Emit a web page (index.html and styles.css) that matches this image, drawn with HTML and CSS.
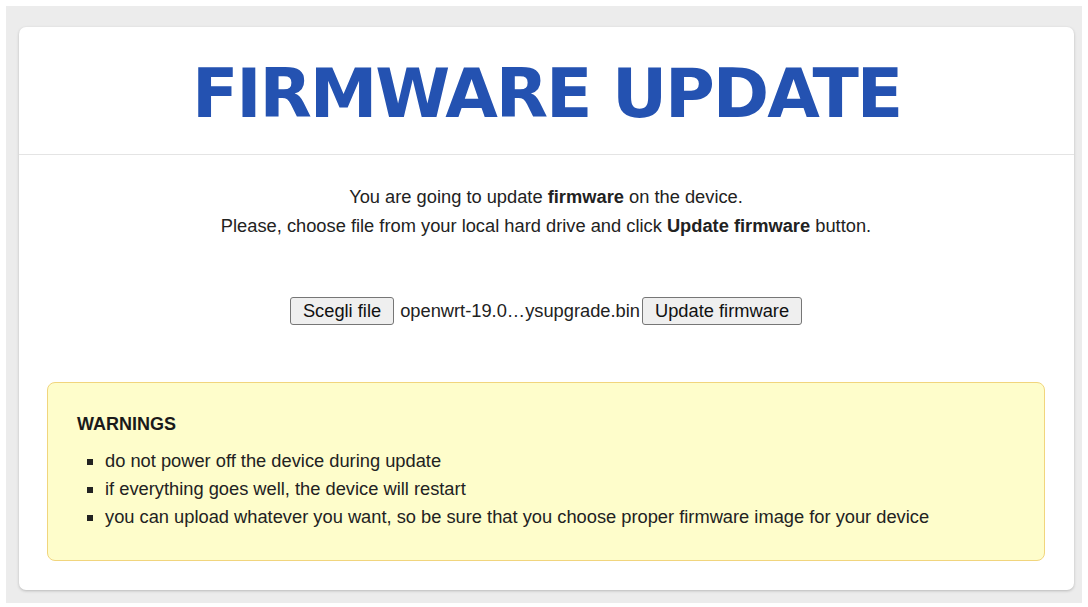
FILE: index.html
```html
<!DOCTYPE html>
<html>
<head>
<meta charset="utf-8">
<title>Firmware update</title>
<link rel="stylesheet" href="styles.css">
</head>
<body>
<div class="frame">
  <div class="card">
    <header class="card-header">
      <h1 class="title">FIRMWARE UPDATE</h1>
    </header>
    <main class="card-body">
      <p class="intro">You are going to update <b>firmware</b> on the device.<br>Please, choose file from your local hard drive and click <b>Update firmware</b> button.</p>
      <form class="upload-row">
        <button type="button" class="btn">Scegli file</button>
        <span class="file-name">openwrt-19.0…ysupgrade.bin</span>
        <button type="button" class="btn">Update firmware</button>
      </form>
      <section class="warnings">
        <h2 class="warnings-title">WARNINGS</h2>
        <ul class="warnings-list">
          <li>do not power off the device during update</li>
          <li>if everything goes well, the device will restart</li>
          <li>you can upload whatever you want, so be sure that you choose proper firmware image for your device</li>
        </ul>
      </section>
    </main>
  </div>
</div>
</body>
</html>
```

FILE: styles.css
```css
html, body {
  margin: 0;
  padding: 0;
  background: #ffffff;
}

body {
  font-family: "Liberation Sans", Arial, sans-serif;
  color: #222222;
}

.frame {
  margin: 6px 6px 0 6px;
  height: 597px;
  box-sizing: border-box;
  background: #ececec;
  padding: 21px 8px 13px 13px;
}

.card {
  background: #ffffff;
  border-radius: 7px;
  box-shadow: 0 1px 3px rgba(0, 0, 0, 0.22);
  height: 563px;
  display: flex;
  flex-direction: column;
}

.card-header {
  height: 128px;
  box-sizing: border-box;
  padding-top: 6px;
  border-bottom: 1px solid #e4e4e4;
  display: flex;
  align-items: center;
  justify-content: center;
}

.title {
  margin: 0;
  font-family: "DejaVu Sans", Verdana, sans-serif;
  font-weight: bold;
  font-size: 68px;
  color: #2452b1;
  letter-spacing: -2.1px;
  line-height: 1;
}

.card-body {
  padding: 27px 29px 0 28px;
  display: flex;
  flex-direction: column;
  align-items: stretch;
}

.intro {
  margin: 0;
  text-align: center;
  font-size: 18.3px;
  line-height: 29px;
}

.intro b {
  font-weight: bold;
}

.upload-row {
  margin: 57px 0 0 0;
  display: flex;
  justify-content: center;
  align-items: center;
  height: 28px;
  font-size: 18.3px;
}

.btn {
  font-family: "Liberation Sans", Arial, sans-serif;
  font-size: 18.3px;
  color: #111111;
  background: #efefef;
  border: 1px solid #767676;
  border-radius: 3px;
  height: 28px;
  padding: 0 12px;
  margin: 0;
}

.file-name {
  padding: 0 2px 0 6px;
  color: #222222;
}

.warnings {
  margin-top: 57px;
  background: #fefdcb;
  border: 1px solid #f1d57d;
  border-radius: 8px;
  padding: 27px 29px 29px 29px;
}

.warnings-title {
  margin: 0;
  font-family: "Liberation Sans", Arial, sans-serif;
  font-size: 18px;
  font-weight: bold;
  line-height: 28px;
  color: #1a1a1a;
}

.warnings-list {
  margin: 9px 0 0 0;
  padding-left: 28px;
  list-style: square;
  font-size: 18.3px;
  line-height: 28px;
  color: #222222;
}
```
